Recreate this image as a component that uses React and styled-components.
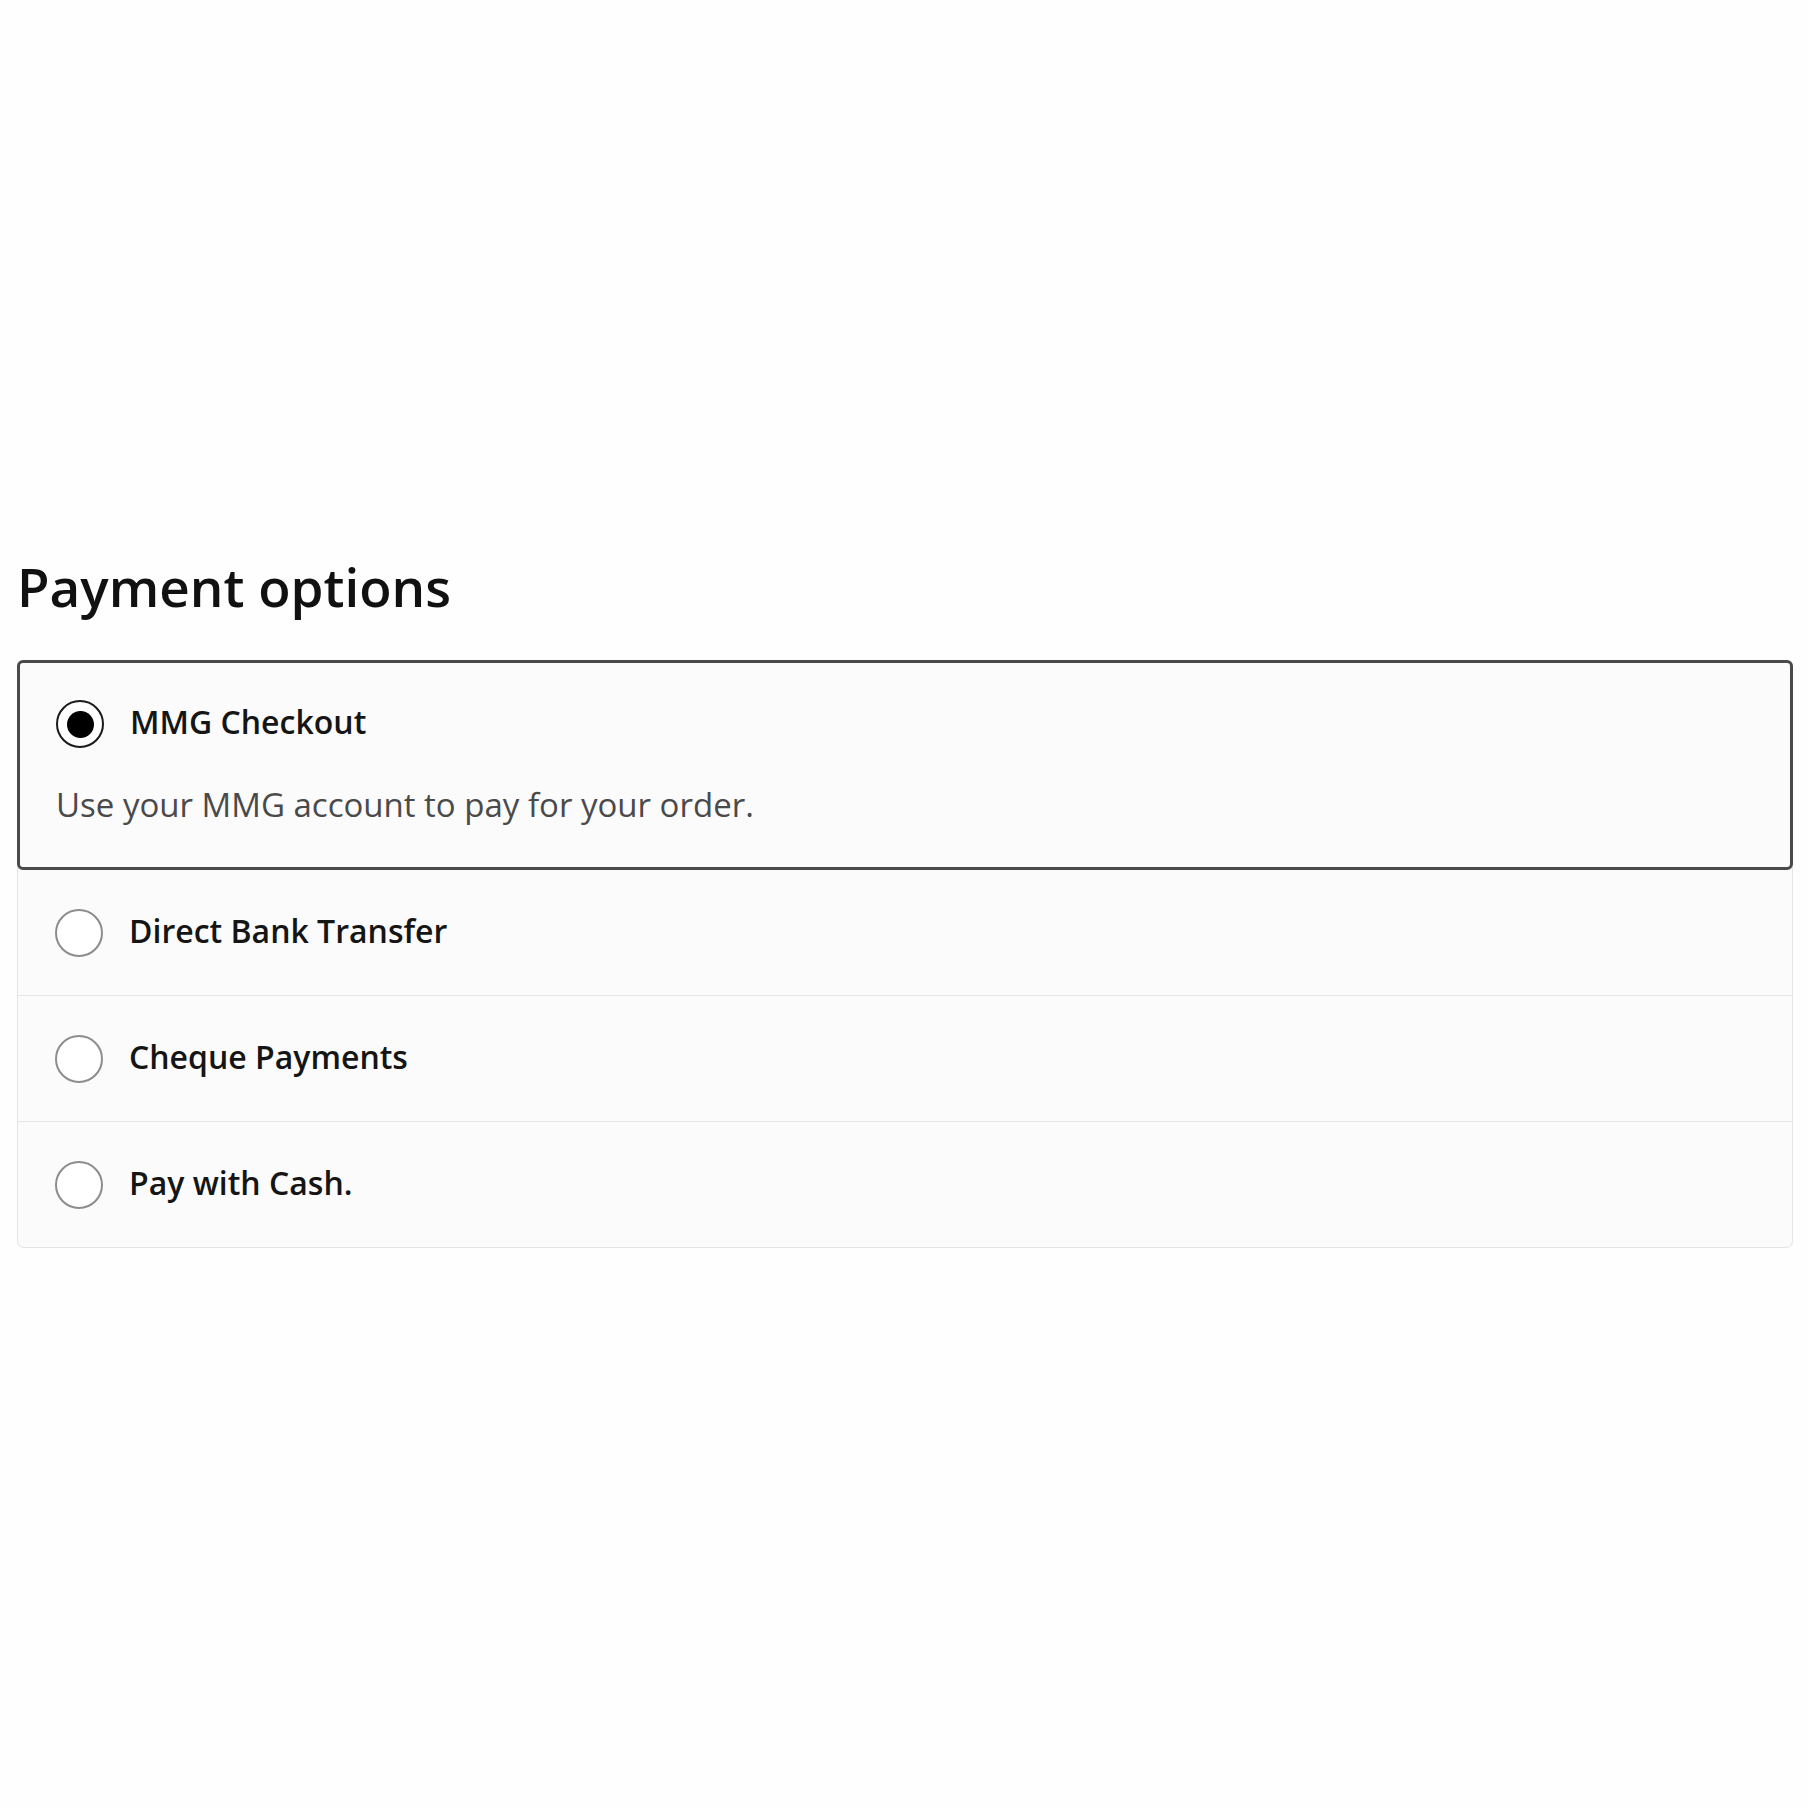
import * as React from "react"
import styled, {createGlobalStyle} from "styled-components"

const GlobalStyle = createGlobalStyle`
  body{
    margin: 0;
    padding: 0;
    background: #fefefe;
    font-family: "Open Sans", "Noto Sans", sans-serif;
    color: #111;
  }
  *{ box-sizing: border-box; }
`

const Section = styled.section`
  padding: 555px 15px 0 17px;
`

const Title = styled.h2`
  margin: 0 0 41px 0;
  font-size: 53px;
  line-height: 64px;
  font-weight: 600;
  color: #111;
`

const List = styled.div`
  display: flex;
  flex-direction: column;
  background: #fbfbfb;
  border: 1px solid #e4e4e4;
  border-top: none;
  border-radius: 7px;
`

const Option = styled.label`
  display: flex;
  flex-direction: column;
  cursor: pointer;
  border-top: ${p => (p.$first ? "none" : "1px solid #e6e6e6")};
  padding: 39px 37px 38px 37px;
  ${p => p.$selected && `
    margin: 0 -1px;
    border: 3px solid #4a4a4a;
    border-radius: 6px;
    padding: 37px 36px 40px 36px;
  `}
`

const Head = styled.div`
  display: flex;
  align-items: center;
  gap: 26px;
`

const Radio = styled.span`
  flex: none;
  width: 48px;
  height: 48px;
  border-radius: 50%;
  border: ${p => (p.$on ? "2px solid #1a1a1a" : "2px solid #8c8c8c")};
  background: #fff;
  display: flex;
  align-items: center;
  justify-content: center;
  &::after{
    content: "";
    display: ${p => (p.$on ? "block" : "none")};
    width: 27px;
    height: 27px;
    border-radius: 50%;
    background: #000;
  }
`

const Label = styled.span`
  font-size: 32px;
  line-height: 44px;
  font-weight: 600;
  color: #151515;
  margin-top: -5px;
`

const Desc = styled.p`
  margin: 35px 0 0 0;
  font-size: 33px;
  line-height: 44px;
  font-weight: 400;
  color: #4a4a4a;
`

const options = [
  {id: "mmg", label: "MMG Checkout", desc: "Use your MMG account to pay for your order."},
  {id: "bank", label: "Direct Bank Transfer"},
  {id: "cheque", label: "Cheque Payments"},
  {id: "cash", label: "Pay with Cash."},
]

const App = () => {
  const [selected, setSelected] = React.useState("mmg")
  return (
    <>
      <GlobalStyle />
      <Section>
        <Title>Payment options</Title>
        <List>
          {options.map((o, i) => {
            const on = o.id === selected
            return (
              <Option key={o.id} $selected={on} $first={i === 0 || options[i - 1].id === selected} onClick={() => setSelected(o.id)}>
                <Head>
                  <Radio $on={on} />
                  <Label>{o.label}</Label>
                </Head>
                {on && o.desc && <Desc>{o.desc}</Desc>}
              </Option>
            )
          })}
        </List>
      </Section>
    </>
  )
}

export default App
